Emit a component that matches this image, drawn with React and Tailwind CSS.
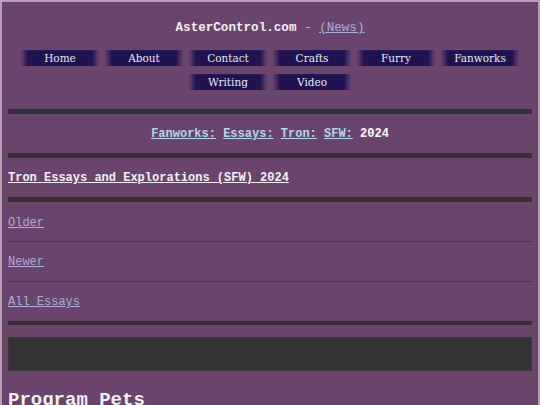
const navRows = [
  ['Home', 'About', 'Contact', 'Crafts', 'Furry', 'Fanworks'],
  ['Writing', 'Video'],
];

const crumbs = ['Fanworks:', 'Essays:', 'Tron:', 'SFW:'];

function NavButton({ label }) {
  return (
    <a
      href="#"
      className="flex h-[16px] w-[78px] items-center justify-center bg-[linear-gradient(to_right,transparent_0%,#1f1250_9%,#1f1250_91%,transparent_100%)] text-[10.5px] leading-none text-[#ebe6f5] shadow-[inset_0_0_2px_#3a2a60] [font-family:'DejaVu_Serif',serif]"
    >
      {label}
    </a>
  );
}

function Bar({ className = '' }) {
  return <div className={`mx-[6px] bg-[#353035] ${className}`}></div>;
}

export default function App() {
  return (
    <div className="h-[405px] w-full overflow-hidden border-x-2 border-t-2 border-[#b3a3b3] bg-[#69456b] text-[12px] leading-[16px] text-[#f2eef2] [font-family:'Liberation_Mono',monospace]">
      <header className="pt-[18px]">
        <p className="text-center text-[12.6px]">
          <span className="font-bold">AsterControl.com</span>
          <span className="text-[#c9b9c9]"> - </span>
          <a href="#" className="text-[#a9acd9] underline">(News)</a>
        </p>
        <nav className="mt-[14px] flex flex-col items-center gap-[8px]">
          {navRows.map((row, i) => (
            <div key={i} className="flex gap-[6px]">
              {row.map((label) => (
                <NavButton key={label} label={label} />
              ))}
            </div>
          ))}
        </nav>
      </header>

      <Bar className="mt-[19px] h-[5px]" />
      <p className="mt-[12px] text-center font-bold">
        {crumbs.map((c) => (
          <span key={c}>
            <a href="#" className="text-[#b3d6ec] underline">{c}</a>{' '}
          </span>
        ))}
        <span className="text-white">2024</span>
      </p>
      <Bar className="mt-[11px] h-[5px]" />
      <h1 className="mx-[6px] mt-[12px] font-bold">
        <a href="#" className="text-[#f4f0f4] underline">Tron Essays and Explorations (SFW) 2024</a>
      </h1>
      <Bar className="mt-[11px] h-[5px]" />

      <ul className="mx-[6px]">
        <li className="border-b border-[#4d3150] pb-[10px] pt-[13px]">
          <a href="#" className="text-[#adabd9] underline">Older</a>
        </li>
        <li className="border-b border-[#4d3150] pb-[11px] pt-[12px]">
          <a href="#" className="text-[#adabd9] underline">Newer</a>
        </li>
        <li className="pt-[12px]">
          <a href="#" className="text-[#adabd9] underline">All Essays</a>
        </li>
      </ul>

      <Bar className="mt-[11px] h-[4px]" />
      <div className="mx-[6px] mt-[12px] h-[34px] border border-[#3d383d] bg-[#333333]"></div>
      <h2 className="mx-[6px] mt-[18px] text-[19px] font-bold leading-[22px] text-[#f4f0f4]">Program Pets</h2>
    </div>
  );
}
